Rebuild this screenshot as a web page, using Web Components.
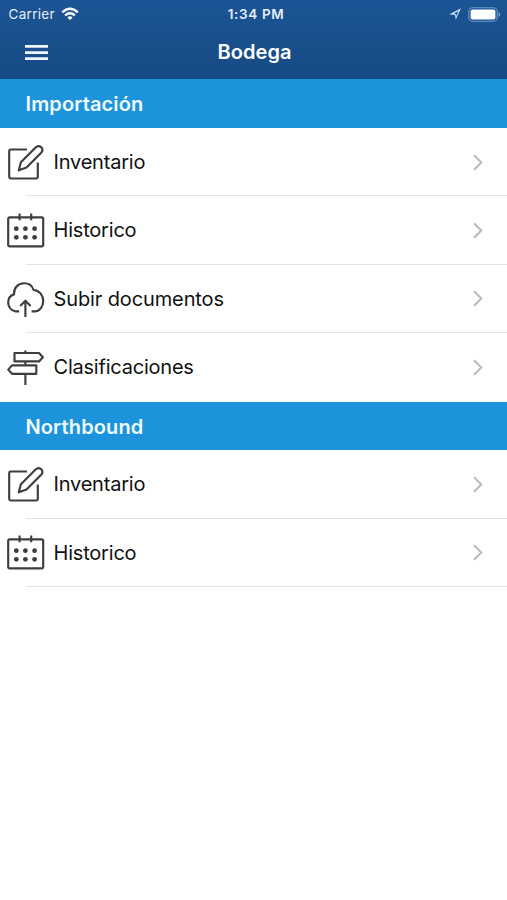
<!DOCTYPE html>
<html lang="es">
<head>
<meta charset="utf-8">
<title>Bodega</title>
<style>
html,body{margin:0;height:100%;background:#fff}
body{font-family:Inter,"Liberation Sans",sans-serif;overflow:hidden}
</style>
</head>
<body>
<bodega-app></bodega-app>
<script>
const define = (name, html) => {
  const t = document.createElement('template');
  t.innerHTML = html;
  customElements.define(name, class extends HTMLElement {
    constructor() {
      super();
      this.attachShadow({ mode: 'open' }).append(t.content.cloneNode(true));
    }
  });
};

const ICONS = {
  edit: '<path d="M20 5.5H3.6Q2.2 5.5 2.2 6.9V33.1Q2.2 34.5 3.6 34.5H29.4Q30.8 34.5 30.8 33.1V18.5"/><path d="M11.8 26.3L13.9 18.2L28.6 3.4Q31.3.8 34 3.1Q36.8 5.8 34.2 8.7L19.5 23.6Z"/>',
  calendar: '<rect x="1.2" y="5.3" width="35" height="29" rx="1.6"/><path d="M12.6 1.5V8.2M24.2 1.5V8.2"/><g fill="#3e3e42" stroke="none"><circle cx="9.3" cy="16.7" r="2.4"/><circle cx="18.4" cy="16.7" r="2.4"/><circle cx="27.6" cy="16.7" r="2.4"/><circle cx="9.3" cy="25.3" r="2.4"/><circle cx="18.4" cy="25.3" r="2.4"/><circle cx="27.6" cy="25.3" r="2.4"/></g>',
  cloud: '<path d="M12.2 31.3H8.2C3.9 30.2 1.2 26.6 1.2 22.5C1.2 18.5 3.5 15.5 7 14.4C6.6 8.3 10.8 3.3 17 3.3C21.6 3.3 25.3 5.9 26.6 10C32.2 10.4 36.2 15 36.2 21C36.2 26.5 32.6 31.3 28.5 31.3H24.6"/><path d="M18.4 37V20.7M13.2 25.9L18.4 20.7L23.6 25.9"/>',
  signs: '<path d="M18.4 1.5V4M18.4 12.4V16M18.4 24.8V36"/><path d="M7.5 4H32L35.9 8.2L32 12.4H7.5ZM29.3 16.4H5L1.2 20.6L5 24.8H29.3Z"/>'
};

define('status-bar', `<style>
:host{display:grid;grid-template-columns:1fr auto 1fr;align-items:center;height:27px;color:#e4eefa;font-size:13.5px;line-height:27px}
.l,.r{display:flex;align-items:center}
.l{padding-left:8.5px;gap:6.5px}.r{justify-content:flex-end;gap:7px;padding-right:6px}
.c{letter-spacing:.3px}.t{font-weight:600;font-size:13.5px;letter-spacing:.65px;padding:1px 0 0 5px}
.c{padding-top:1px}
svg{display:block}
</style>
<div class="l"><span class="c">Carrier</span><svg width="18" height="14" viewBox="0 0 18 14" fill="none" stroke="#fff" stroke-width="2.3"><path d="M1.2 5.3Q9 -1.8 16.8 5.3M4.1 8.4Q9 4.2 13.9 8.4"/><path d="M6.4 10.4Q9 8.2 11.6 10.4L9 13Z" fill="#fff" stroke="none"/></svg></div>
<span class="t">1:34 PM</span>
<div class="r"><svg width="12" height="12" viewBox="0 0 12 12"><path d="M12 .2L6.7 11.8L6.1 7L.3 6.2ZM9.3 3.2L5 5.6L7 6.3L7.3 8Z" fill="#c5e0f5" fill-rule="evenodd"/></svg><svg width="33" height="15" viewBox="0 0 33 15"><rect x=".8" y=".8" width="28.4" height="13.4" rx="3.8" fill="none" stroke="#6d9bcb" stroke-width="1.1"/><rect x="2.6" y="2.6" width="24.8" height="9.8" rx="2" fill="#fff"/><path d="M30.5 5.2Q32.3 5.8 32.3 7.5T30.5 9.8Z" fill="#6d9bcb"/></svg></div>`);

define('nav-bar', `<style>
:host{display:grid;grid-template-columns:1fr auto 1fr;align-items:center;height:50px;color:#fff}
svg{display:block;margin-left:25px}
h1{margin:0;font-size:20px;font-weight:600;line-height:50px;letter-spacing:.05px;padding-left:2px}
</style>
<svg width="23" height="17" viewBox="0 0 23 17" fill="#eff5fc"><path d="M0 1H23V3.7H0ZM0 7.2H23V9.9H0ZM0 13.3H23V16H0Z"/></svg>
<h1><slot></slot></h1><span></span>`);

define('list-section', `<style>
:host{display:block}
header{box-sizing:border-box;height:48.7px;line-height:51px;padding-left:25.5px;background:#1c93da;color:#f0faff;font-size:20px;font-weight:600;letter-spacing:.13px}
</style><header><slot name="title"></slot></header><slot></slot>`);

customElements.define('list-row', class extends HTMLElement {
  connectedCallback() {
    this.attachShadow({ mode: 'open' }).innerHTML = `<style>
:host{display:grid;grid-template-columns:38px 1fr 12px;align-items:center;box-sizing:border-box;height:68.4px;padding:0 23.5px 0 7px;color:#111;background:linear-gradient(#e3e3e5,#e3e3e5) 25.5px 100%/100% 1px no-repeat}
:host([last]){background:none}
svg{display:block}
.label{padding-left:8.5px;font-size:20px;line-height:69px;letter-spacing:-.2px}
</style>
<svg width="38" height="38" viewBox="0 0 38 38" fill="none" stroke="#3e3e42" stroke-width="2.15" stroke-linejoin="round">${ICONS[this.getAttribute('icon')]}</svg>
<span class="label"><slot></slot></span>
<svg width="12" height="18" viewBox="0 0 12 18" fill="none" stroke="#b9b9bd" stroke-width="2"><path d="M2 1.2L9.3 8.5L2 15.8"/></svg>`;
    const gap = this.getAttribute('tracking');
    if (gap) this.shadowRoot.querySelector('.label').style.letterSpacing = gap;
  }
});

define('bodega-app', `<style>
:host{display:block;width:507px;height:900px;background:#fff}
.top{box-sizing:border-box;height:79.4px;background:linear-gradient(#1c5595,#164a83)}
</style>
<div class="top"><status-bar></status-bar><nav-bar>Bodega</nav-bar></div>
<list-section><span slot="title">Importación</span>
<list-row icon="edit">Inventario</list-row>
<list-row icon="calendar">Historico</list-row>
<list-row icon="cloud" tracking="-.12px">Subir documentos</list-row>
<list-row icon="signs" tracking="-.22px" last>Clasificaciones</list-row>
</list-section>
<list-section><span slot="title">Northbound</span>
<list-row icon="edit">Inventario</list-row>
<list-row icon="calendar">Historico</list-row>
</list-section>`);
</script>
</body>
</html>
